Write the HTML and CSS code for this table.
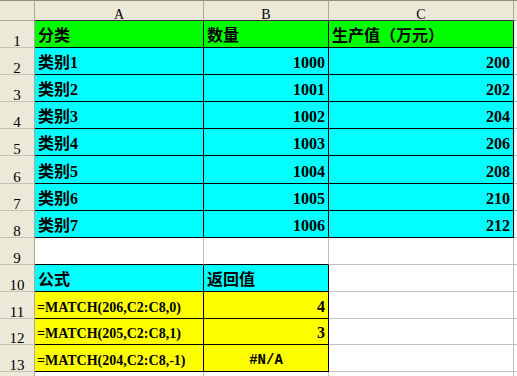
FILE: index.html
```html
<!DOCTYPE html>
<html lang="zh">
<head>
<meta charset="utf-8">
<title>MATCH</title>
<link rel="stylesheet" href="styles.css">
</head>
<body>
<div class="sheet">
  <div class="hd corner"></div>
  <div class="hd col dk">A</div>
  <div class="hd col dk">B</div>
  <div class="hd col dk">C</div>
  <div class="hd col end"></div>

  <div class="rh">1</div>
  <div class="cell g">分类</div>
  <div class="cell g">数量</div>
  <div class="cell g">生产值（万元）</div>
  <div class="cell d"></div>

  <div class="rh">2</div>
  <div class="cell cy">类别1</div>
  <div class="cell cy num">1000</div>
  <div class="cell cy num">200</div>
  <div class="cell d"></div>

  <div class="rh">3</div>
  <div class="cell cy">类别2</div>
  <div class="cell cy num">1001</div>
  <div class="cell cy num">202</div>
  <div class="cell d"></div>

  <div class="rh">4</div>
  <div class="cell cy">类别3</div>
  <div class="cell cy num">1002</div>
  <div class="cell cy num">204</div>
  <div class="cell d"></div>

  <div class="rh">5</div>
  <div class="cell cy">类别4</div>
  <div class="cell cy num">1003</div>
  <div class="cell cy num">206</div>
  <div class="cell d"></div>

  <div class="rh">6</div>
  <div class="cell cy">类别5</div>
  <div class="cell cy num">1004</div>
  <div class="cell cy num">208</div>
  <div class="cell d"></div>

  <div class="rh">7</div>
  <div class="cell cy">类别6</div>
  <div class="cell cy num">1005</div>
  <div class="cell cy num">210</div>
  <div class="cell d"></div>

  <div class="rh">8</div>
  <div class="cell cy">类别7</div>
  <div class="cell cy num">1006</div>
  <div class="cell cy num">212</div>
  <div class="cell d"></div>

  <div class="rh">9</div>
  <div class="cell bb"></div>
  <div class="cell bb"></div>
  <div class="cell"></div>
  <div class="cell d"></div>

  <div class="rh">10</div>
  <div class="cell cy">公式</div>
  <div class="cell cy">返回值</div>
  <div class="cell"></div>
  <div class="cell d"></div>

  <div class="rh">11</div>
  <div class="cell y fx">=MATCH(206,C2:C8,0)</div>
  <div class="cell y num">4</div>
  <div class="cell"></div>
  <div class="cell d"></div>

  <div class="rh">12</div>
  <div class="cell y fx">=MATCH(205,C2:C8,1)</div>
  <div class="cell y num">3</div>
  <div class="cell"></div>
  <div class="cell d"></div>

  <div class="rh">13</div>
  <div class="cell y fx">=MATCH(204,C2:C8,-1)</div>
  <div class="cell y err">#N/A</div>
  <div class="cell"></div>
  <div class="cell d"></div>

  <div class="rh"></div>
  <div class="cell"></div>
  <div class="cell"></div>
  <div class="cell"></div>
  <div class="cell d"></div>
</div>
</body>
</html>
```
FILE: styles.css
```css
html, body {
  margin: 0;
  padding: 0;
  background: #ffffff;
}

.sheet {
  display: grid;
  grid-template-columns: 35px 169px 125px 185px 1fr;
  grid-template-rows: 21px 27px 27px 27px 27px 27px 28px 27px 27px 27px 27px 27px 26px 27px 10px;
  width: 517px;
  height: 376px;
  overflow: hidden;
  font-family: "Liberation Serif", "Noto Sans CJK SC", serif;
  color: #000;
}

.hd {
  box-sizing: border-box;
  background: #ece9d8;
  border-top: 1px solid #8f8d84;
  border-right: 1px solid #aca899;
  border-bottom: 1px solid #aca899;
  display: flex;
  align-items: flex-end;
  justify-content: center;
  font-size: 14px;
  line-height: 10px;
  color: #000;
}

.hd.dk {
  border-bottom-color: #303030;
}

.hd.end {
  border-right: none;
}

.rh {
  box-sizing: border-box;
  background: #ece9d8;
  border-right: 1px solid #aca899;
  border-bottom: 1px solid #c5c2b2;
  display: flex;
  align-items: flex-end;
  justify-content: center;
  font-size: 15px;
  line-height: 12px;
}

.cell {
  box-sizing: border-box;
  border-right: 1px solid #c0c0c0;
  border-bottom: 1px solid #c0c0c0;
  display: flex;
  align-items: flex-end;
  padding: 0 3px 2px 3px;
  overflow: hidden;
  white-space: nowrap;
  font-size: 16px;
  font-weight: bold;
  line-height: 18px;
  background: #ffffff;
}

.cell.d {
  border-right: none;
  padding: 0;
}

.g {
  background: #00ff00;
  border-color: #000;
}

.cy {
  background: #00ffff;
  border-color: #000;
}

.y {
  background: #ffff00;
  border-color: #000;
}

.bb {
  border-bottom-color: #000;
}

.num {
  justify-content: flex-end;
}

.fx {
  font-size: 14px;
  padding-bottom: 1px;
  padding-left: 2px;
}

.err {
  justify-content: center;
  font-family: "Liberation Mono", monospace;
  font-size: 14px;
}
```
